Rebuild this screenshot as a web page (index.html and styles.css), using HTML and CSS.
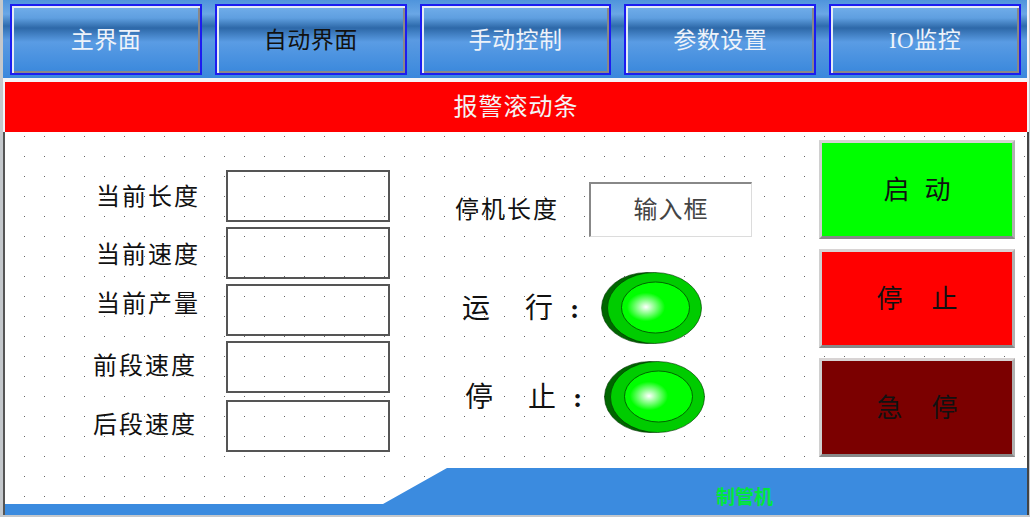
FILE: index.html
```html
<!DOCTYPE html>
<html lang="zh-CN">
<head>
    <meta charset="UTF-8">
    <title>制管机</title>
    <link rel="stylesheet" href="styles.css">
</head>
<body>
    <div class="screen">
        <nav class="nav">
            <button class="nav-btn">主界面</button>
            <button class="nav-btn nav-btn-active">自动界面</button>
            <button class="nav-btn">手动控制</button>
            <button class="nav-btn">参数设置</button>
            <button class="nav-btn">IO监控</button>
        </nav>

        <div class="alarm">报警滚动条</div>

        <div class="workspace">
            <main class="panel">
                <div class="readings">
                    <div class="reading"><span class="reading-label">当前长度</span><div class="reading-box"></div></div>
                    <div class="reading reading-speed"><span class="reading-label">当前速度</span><div class="reading-box"></div></div>
                    <div class="reading reading-output"><span class="reading-label">当前产量</span><div class="reading-box"></div></div>
                    <div class="reading reading-low"><span class="reading-label">前段速度</span><div class="reading-box"></div></div>
                    <div class="reading reading-low reading-last"><span class="reading-label">后段速度</span><div class="reading-box"></div></div>
                </div>

                <div class="status">
                    <div class="stop-length">
                        <span class="stop-label">停机长度</span>
                        <div class="input-box">输入框</div>
                    </div>
                    <div class="lamp-row lamp-run">
                        <span class="lamp-label"><span>运</span><span>行</span><span class="lamp-colon">:</span></span>
                        <svg class="lamp" viewBox="0 0 102 74">
                            <defs>
                                <radialGradient id="glow1" cx="0.36" cy="0.49" r="0.28">
                                    <stop offset="0" stop-color="#ffffff"/>
                                    <stop offset="1" stop-color="#00ff00"/>
                                </radialGradient>
                            </defs>
                            <ellipse cx="46" cy="36" rx="45.5" ry="35.5" fill="#006600" stroke="#003300" stroke-width="0.6"/>
                            <ellipse cx="53.5" cy="36" rx="47" ry="35.5" fill="#00cc00" stroke="#003300" stroke-width="0.6"/>
                            <ellipse cx="54.5" cy="35.5" rx="34" ry="25.5" fill="url(#glow1)" stroke="#004400" stroke-width="0.8"/>
                        </svg>
                    </div>
                    <div class="lamp-row lamp-stop">
                        <span class="lamp-label"><span>停</span><span>止</span><span class="lamp-colon">:</span></span>
                        <svg class="lamp" viewBox="0 0 102 74">
                            <defs>
                                <radialGradient id="glow2" cx="0.36" cy="0.49" r="0.28">
                                    <stop offset="0" stop-color="#ffffff"/>
                                    <stop offset="1" stop-color="#00ff00"/>
                                </radialGradient>
                            </defs>
                            <ellipse cx="46" cy="36" rx="45.5" ry="35.5" fill="#006600" stroke="#003300" stroke-width="0.6"/>
                            <ellipse cx="53.5" cy="36" rx="47" ry="35.5" fill="#00cc00" stroke="#003300" stroke-width="0.6"/>
                            <ellipse cx="54.5" cy="35.5" rx="34" ry="25.5" fill="url(#glow2)" stroke="#004400" stroke-width="0.8"/>
                        </svg>
                    </div>
                </div>

                <div class="actions">
                    <button class="action action-start"><span>启</span><span>动</span></button>
                    <button class="action action-stop"><span>停</span><span>止</span></button>
                    <button class="action action-estop"><span>急</span><span>停</span></button>
                </div>
            </main>

            <footer class="footer"><span class="footer-text">制管机</span></footer>
        </div>
    </div>
</body>
</html>
```

FILE: styles.css
```css
html, body {
    margin: 0;
    padding: 0;
}
body {
    box-sizing: border-box;
    width: 1030px;
    height: 517px;
    overflow: hidden;
    padding: 0 1px 2px 3px;
    background-color: #c4c8cc;
    font-family: "Liberation Serif", "Noto Sans CJK SC", serif;
    color: #111;
}
button {
    font-family: inherit;
    padding: 0;
    cursor: pointer;
}
.screen {
    height: 515px;
    display: flex;
    flex-direction: column;
    background-color: #f4f4f6;
}
.nav {
    flex: none;
    height: 78px;
    margin-right: 2px;
    box-sizing: border-box;
    padding: 4px 6px 0 7px;
    display: flex;
    gap: 13px;
    background: linear-gradient(to bottom, #4f94dc 0, #6aa7e6 14px, #2e6cae 26px, #5a9ae2 40px, #3a88dc 100%);
}
.nav-btn {
    width: 192px;
    height: 71px;
    box-sizing: border-box;
    border: 2px solid #1c1cf0;
    box-shadow: inset 2px 2px 0 #e4ecf6, inset -2px -2px 0 #888;
    background: linear-gradient(to bottom, #72aeea 0, #5f9fe0 12px, #2d68a8 22px, #5a9ce4 36px, #3a88dc 100%);
    color: #eef3fa;
    font-size: 23px;
    letter-spacing: 0.5px;
    padding-bottom: 4px;
}
.nav-btn-active {
    color: #111;
}
.alarm {
    flex: none;
    height: 50px;
    margin: 4px 2px 0 2px;
    background-color: #ff0000;
    color: #f4f4f4;
    font-size: 24px;
    letter-spacing: 1px;
    line-height: 50px;
    text-align: center;
}
.workspace {
    flex: 1;
    display: flex;
    flex-direction: column;
    border-left: 2px solid #555;
    border-right: 2px solid #444;
    background-color: #fff;
    background-image: radial-gradient(circle at 10.5px 10.5px, #666 0.5px, transparent 0.9px);
    background-size: 20px 20px;
    background-position: 9px -6px;
}
.panel {
    flex: 1;
    display: flex;
}
.readings {
    width: 388px;
    padding-top: 38px;
    box-sizing: border-box;
}
.reading {
    display: flex;
    align-items: center;
    height: 52px;
    margin-bottom: 5px;
}
.reading-last {
    margin-top: 7px;
}
.reading-label {
    width: 221px;
    box-sizing: border-box;
    padding-left: 91px;
    padding-bottom: 3px;
    font-size: 24px;
    letter-spacing: 2px;
}
.reading-speed .reading-label {
    padding-bottom: 1px;
}
.reading-output .reading-label {
    padding-bottom: 17px;
}
.reading-low .reading-label {
    padding-left: 88px;
    padding-bottom: 7px;
}
.reading-box {
    width: 164px;
    height: 52px;
    box-sizing: border-box;
    border: 2px solid #555;
}
.status {
    width: 426px;
    box-sizing: border-box;
    padding-top: 50px;
}
.stop-length {
    display: flex;
    align-items: center;
}
.stop-label {
    width: 196px;
    padding-left: 62px;
    padding-bottom: 5px;
    box-sizing: border-box;
    font-size: 24px;
    letter-spacing: 2px;
    white-space: nowrap;
}
.input-box {
    width: 163px;
    height: 55px;
    box-sizing: border-box;
    border: 1px solid #dcdcdc;
    border-top: 2px solid #888;
    border-left: 2px solid #888;
    background-color: #fff;
    color: #444;
    font-size: 24px;
    letter-spacing: 1px;
    line-height: 52px;
    text-align: center;
}
.lamp-row {
    display: flex;
    align-items: center;
}
.lamp-run {
    margin-top: 35px;
    padding-left: 69px;
}
.lamp-stop {
    margin-top: 15px;
    padding-left: 72px;
}
.lamp-label {
    width: 139px;
    display: flex;
    gap: 35px;
    font-size: 28px;
    padding-bottom: 7px;
}
.lamp-colon {
    margin: 7px 0 -7px -18px;
    font-weight: bold;
}
.lamp {
    width: 102px;
    height: 74px;
    display: block;
}
.actions {
    display: flex;
    flex-direction: column;
    gap: 10px;
    padding-top: 8px;
}
.action {
    width: 196px;
    height: 99px;
    display: flex;
    align-items: center;
    justify-content: center;
    gap: 29px;
    box-sizing: border-box;
    border: 3px solid;
    border-color: #d8d4d4 #b0b0b0 #888 #d0d0d0;
    padding-bottom: 4px;
    font-size: 26px;
    color: #111;
}
.action-start {
    background-color: #00ff00;
    gap: 15px;
}
.action-stop {
    background-color: #ff0000;
}
.action-estop {
    background-color: #7b0000;
}
.footer {
    flex: none;
    height: 47px;
    box-sizing: border-box;
    background-color: #3b8bdf;
    clip-path: polygon(0 36px, 378px 36px, 442px 0, 100% 0, 100% 100%, 0 100%);
    display: flex;
    align-items: center;
    padding: 7px 0 0 711px;
}
.footer-text {
    color: #00e83a;
    font-size: 19px;
    font-weight: bold;
}
```
